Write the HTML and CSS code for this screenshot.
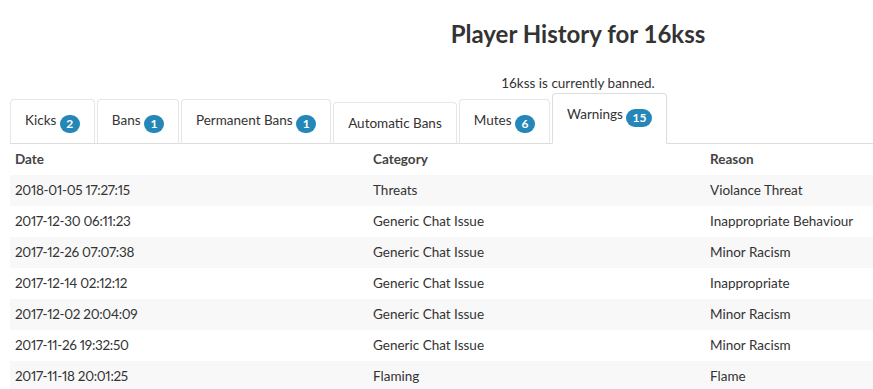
FILE: index.html
```html
<!DOCTYPE html>
<html>
<head>
    <meta charset="UTF-8">
    <title>Player History</title>
    <link rel="stylesheet" href="styles.css">
</head>
<body>
    <div class="container">
        <div class="header">
            <h1 class="title">Player History for 16kss</h1>
            <p class="status">16kss is currently banned.</p>
        </div>

        <ul class="tabs">
            <li class="tab">Kicks <span class="badge">2</span></li>
            <li class="tab">Bans <span class="badge">1</span></li>
            <li class="tab">Permanent Bans <span class="badge">1</span></li>
            <li class="tab">Automatic Bans</li>
            <li class="tab">Mutes <span class="badge">6</span></li>
            <li class="tab active">Warnings <span class="badge">15</span></li>
        </ul>

        <table class="history">
            <thead>
                <tr>
                    <th class="col-date">Date</th>
                    <th class="col-category">Category</th>
                    <th>Reason</th>
                </tr>
            </thead>
            <tbody>
                <tr><td class="date">2018-01-05 17:27:15</td><td>Threats</td><td>Violance Threat</td></tr>
                <tr><td class="date">2017-12-30 06:11:23</td><td>Generic Chat Issue</td><td>Inappropriate Behaviour</td></tr>
                <tr><td class="date">2017-12-26 07:07:38</td><td>Generic Chat Issue</td><td>Minor Racism</td></tr>
                <tr><td class="date">2017-12-14 02:12:12</td><td>Generic Chat Issue</td><td>Inappropriate</td></tr>
                <tr><td class="date">2017-12-02 20:04:09</td><td>Generic Chat Issue</td><td>Minor Racism</td></tr>
                <tr><td class="date">2017-11-26 19:32:50</td><td>Generic Chat Issue</td><td>Minor Racism</td></tr>
                <tr><td class="date">2017-11-18 20:01:25</td><td>Flaming</td><td>Flame</td></tr>
            </tbody>
        </table>
    </div>
</body>
</html>
```

FILE: styles.css
```css
body {
    font-family: Lato, "Liberation Sans", sans-serif;
    font-size: 13.5px;
    color: #333;
    background-color: #ffffff;
    margin: 0;
    overflow: hidden;
}
.container {
    margin-left: 10px;
}
.header {
    padding-left: 273px;
    text-align: center;
}
.title {
    font-size: 24px;
    font-weight: bold;
    margin: 0;
    padding-top: 20px;
    line-height: 28px;
}
.status {
    margin: 25px 0 0;
    line-height: 20px;
}
.tabs {
    display: flex;
    align-items: flex-end;
    list-style: none;
    margin: 0;
    padding: 0;
    border-bottom: 1px solid #ddd;
}
.tab {
    margin-right: 2px;
    margin-bottom: -1px;
    padding: 10px 14px;
    line-height: 20px;
    border: 1px solid #e6e6e6;
    border-bottom-color: #ddd;
    border-radius: 4px 4px 0 0;
    white-space: nowrap;
}
.tab.active {
    padding-bottom: 16px;
    border-color: #ddd;
    border-bottom-color: #fff;
    background-color: #fff;
}
.badge {
    display: inline-block;
    min-width: 20px;
    height: 18px;
    padding: 0 6px;
    box-sizing: border-box;
    border-radius: 10px;
    background-color: #2487b8;
    color: #fff;
    font-size: 12px;
    font-weight: bold;
    line-height: 18px;
    text-align: center;
    vertical-align: -3px;
}
.history {
    width: 100%;
    border-collapse: collapse;
    font-variant-numeric: proportional-nums;
}
.history th,
.history td {
    text-align: left;
    padding: 5px;
    line-height: 21px;
    vertical-align: top;
}
.history th {
    color: #444;
    font-weight: bold;
}
.history .date {
    letter-spacing: -0.3px;
}
.col-date {
    width: 348px;
}
.col-category {
    width: 327px;
}
.history tbody tr:nth-child(odd) {
    background-color: #f8f8f8;
}
```
